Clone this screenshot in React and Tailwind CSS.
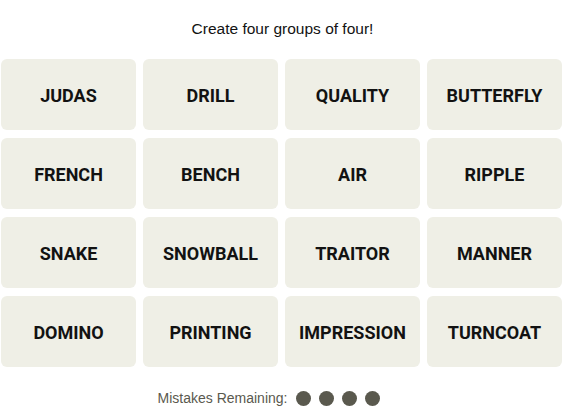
import React from 'react';

const words = [
  'JUDAS', 'DRILL', 'QUALITY', 'BUTTERFLY',
  'FRENCH', 'BENCH', 'AIR', 'RIPPLE',
  'SNAKE', 'SNOWBALL', 'TRAITOR', 'MANNER',
  'DOMINO', 'PRINTING', 'IMPRESSION', 'TURNCOAT',
];

export default function App() {
  return (
    <div className="w-[565px] h-[409px] bg-white overflow-hidden" style={{ fontFamily: '"Liberation Sans", Arial, sans-serif' }}>
      {/* Header */}
      <div className="h-[59px] flex items-center justify-center pb-[1px]">
        <p className="text-[15.5px] text-[#121212]">Create four groups of four!</p>
      </div>

      {/* Board */}
      <div className="ml-[1px] w-[561px] grid grid-cols-4 gap-x-[7px] gap-y-[8px]">
        {words.map((w) => (
          <button
            key={w}
            className="h-[71px] rounded-md bg-[#efefe6] flex items-center justify-center pt-[1px] text-[18px] font-bold text-[#121212] font-['Roboto',sans-serif]"
          >
            {w}
          </button>
        ))}
      </div>

      {/* Mistakes */}
      <div className="mt-[21px] flex items-center justify-center pr-[27px]">
        <span className="text-[14px] text-[#5a594e] mr-[9px]">Mistakes Remaining:</span>
        <div className="flex items-center gap-[8px]">
          <span className="w-[15px] h-[15px] rounded-full bg-[#5a594e]" />
          <span className="w-[15px] h-[15px] rounded-full bg-[#5a594e]" />
          <span className="w-[15px] h-[15px] rounded-full bg-[#5a594e]" />
          <span className="w-[15px] h-[15px] rounded-full bg-[#5a594e]" />
        </div>
      </div>
    </div>
  );
}
